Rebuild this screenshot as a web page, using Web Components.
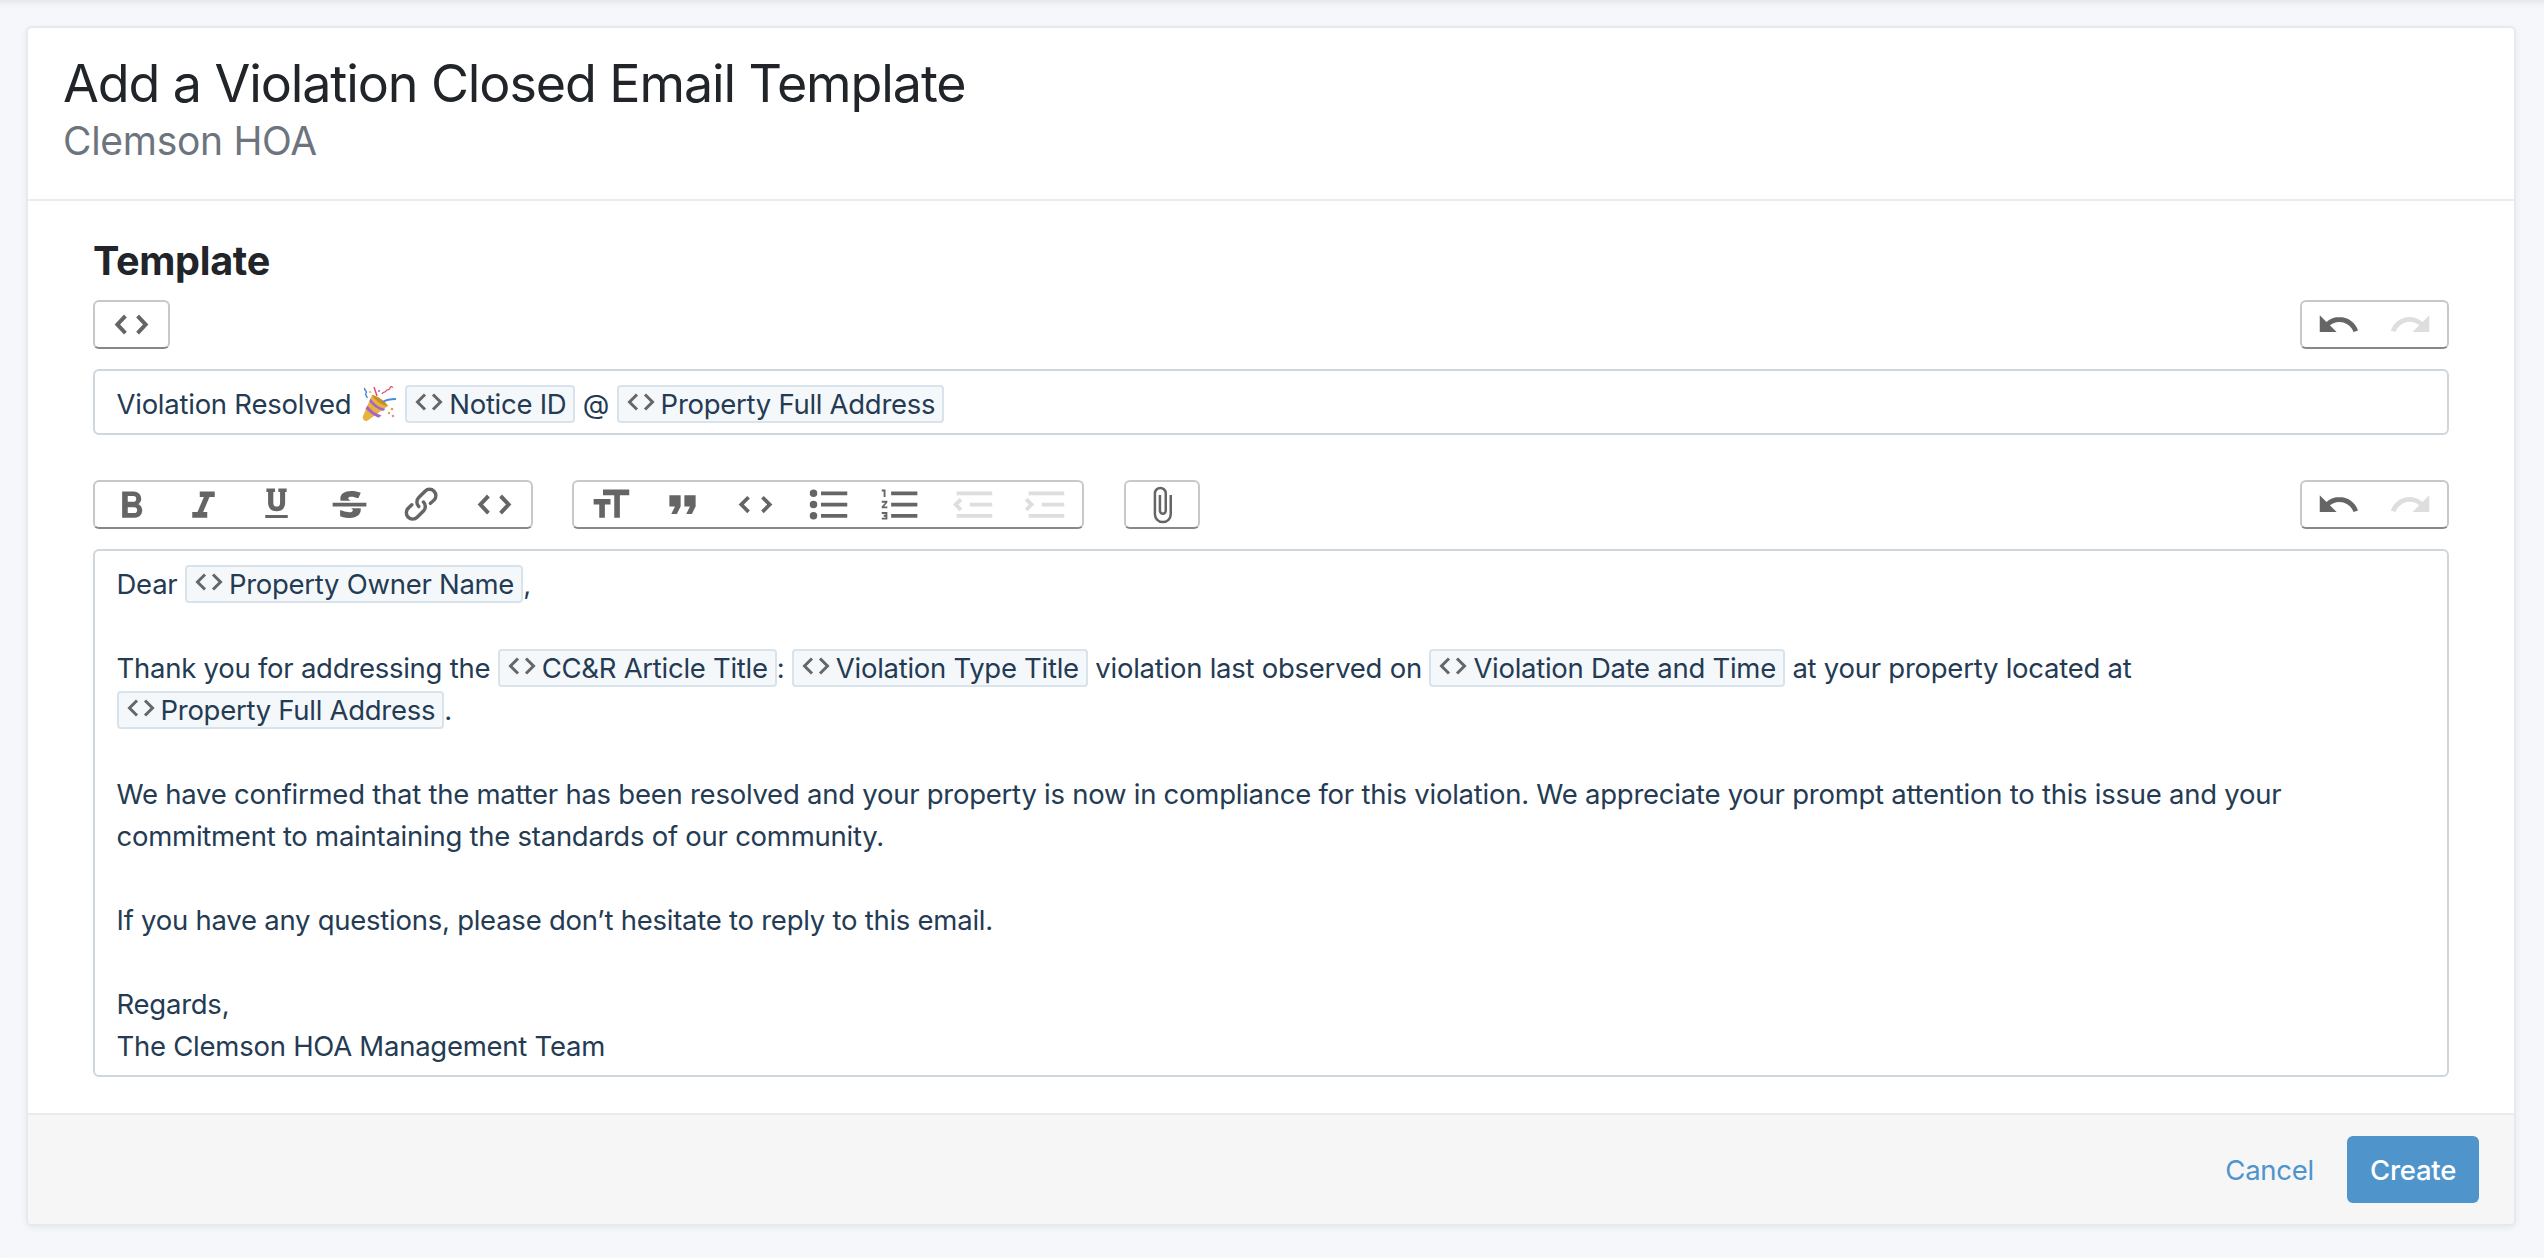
<!DOCTYPE html>
<html lang="en">
<head>
<meta charset="utf-8">
<title>Add a Violation Closed Email Template</title>
<style>
  html, body { margin: 0; height: 100%; }
  body { background: #f5f7fa; font-family: Inter, "Liberation Sans", sans-serif; overflow: hidden; }
</style>
</head>
<body>
<template-page>
  <page-card>
    <card-header slot="header" title="Add a Violation Closed Email Template" subtitle="Clemson HOA"></card-header>

    <section-title>Template</section-title>

    <tool-row class="top">
      <tool-group><tool-btn icon="codeTall"></tool-btn></tool-group>
      <tool-group slot="end"><tool-btn icon="undo"></tool-btn><tool-btn icon="redo" disabled></tool-btn></tool-group>
    </tool-row>

    <rich-box kind="subject">Violation Resolved <party-popper></party-popper> <merge-tag>Notice ID</merge-tag> @ <merge-tag>Property Full Address</merge-tag></rich-box>

    <tool-row class="main">
      <tool-group>
        <tool-btn icon="bold"></tool-btn><tool-btn icon="italic"></tool-btn><tool-btn icon="underline"></tool-btn><tool-btn icon="strike"></tool-btn><tool-btn icon="link"></tool-btn><tool-btn icon="codeTall"></tool-btn>
      </tool-group>
      <tool-group>
        <tool-btn icon="heading"></tool-btn><tool-btn icon="quote"></tool-btn><tool-btn icon="code"></tool-btn><tool-btn icon="bullets"></tool-btn><tool-btn icon="numbers"></tool-btn><tool-btn icon="outdent" disabled></tool-btn><tool-btn icon="indent" disabled></tool-btn>
      </tool-group>
      <tool-group><tool-btn icon="attach"></tool-btn></tool-group>
      <tool-group slot="end"><tool-btn icon="undo"></tool-btn><tool-btn icon="redo" disabled></tool-btn></tool-group>
    </tool-row>

    <rich-box kind="body">Dear <merge-tag>Property Owner Name</merge-tag>,<br><br>Thank you for addressing the <merge-tag>CC&amp;R Article Title</merge-tag>: <merge-tag>Violation Type Title</merge-tag> violation last observed on <merge-tag>Violation Date and Time</merge-tag> at your property located at <merge-tag>Property Full Address</merge-tag>.<br><br>We have confirmed that the matter has been resolved and your property is now in compliance for this violation. We appreciate your prompt attention to this issue and your commitment to maintaining the standards of our community.<br><br>If you have any questions, please don’t hesitate to reply to this email.<br><br>Regards,<br>The Clemson HOA Management Team</rich-box>

    <card-footer slot="footer">
      <a-link>Cancel</a-link>
      <primary-btn>Create</primary-btn>
    </card-footer>
  </page-card>
</template-page>

<script>
const ICONS = {
  bold: "M15.6 11.8c1-.7 1.6-1.8 1.6-2.8a4 4 0 0 0-4-4H7v14h7c2.1 0 3.7-1.7 3.7-3.8 0-1.5-.8-2.8-2.1-3.4zM10 7.5h3a1.5 1.5 0 1 1 0 3h-3v-3zm3.5 9H10v-3h3.5a1.5 1.5 0 1 1 0 3z",
  italic: "M10 5v3h2.2l-3.4 8H6v3h8v-3h-2.2l3.4-8H18V5h-8z",
  underline: "M6.6 3.5h4.6v1.8h-.9v5.700c0 1.400.6 2.100 1.800 2.100s1.800-.7 1.800-2.100V5.300h-.9V3.500h4.400v1.800h-.8v5.800c0 2.900-1.700 4.500-4.500 4.500s-4.600-1.600-4.600-4.500V5.300h-.9zM6 17.600h12v1.600H6z",
  strike: "M12.73 14l.28.14c.26.15.45.3.57.44.12.14.18.3.18.5 0 .3-.15.56-.44.75-.3.2-.76.3-1.39.3A13.52 13.52 0 0 1 7 14.95v3.37a10.64 10.64 0 0 0 4.84.88c1.26 0 2.35-.19 3.28-.56.93-.37 1.64-.9 2.14-1.57s.74-1.45.74-2.32c0-.26-.02-.51-.06-.75h-5.21zm-5.5-4c-.08-.34-.12-.7-.12-1.1 0-1.29.52-2.3 1.58-3.02 1.05-.72 2.5-1.08 4.34-1.08 1.62 0 3.28.34 4.97 1l-1.3 2.93c-1.47-.6-2.73-.9-3.8-.9-.55 0-.96.08-1.2.26-.26.17-.38.38-.38.64 0 .27.16.52.48.74.17.12.53.3 1.05.53H7.23zM3 13h18v-2H3v2z",
  link: "M9.88 13.7a4.3 4.3 0 0 1 0-6.07l3.37-3.37a4.26 4.26 0 0 1 6.07 0 4.3 4.3 0 0 1 0 6.06l-1.96 1.72a.91.91 0 1 1-1.3-1.3l1.97-1.71a2.46 2.46 0 0 0-3.48-3.48l-3.38 3.37a2.46 2.46 0 0 0 0 3.48.91.91 0 1 1-1.3 1.3zM4.25 19.46a4.3 4.3 0 0 1 0-6.07l1.93-1.9a.91.91 0 1 1 1.3 1.3l-1.93 1.9a2.46 2.46 0 0 0 3.48 3.48l3.37-3.38c.96-.96.96-2.52 0-3.48a.91.91 0 1 1 1.3-1.3 4.3 4.3 0 0 1 0 6.07l-3.38 3.38a4.26 4.26 0 0 1-6.07 0z",
  code: "M18.2 12L15 15.2l1.4 1.4L21 12l-4.6-4.6L15 8.8l3.2 3.2zm-12.4 0L9 8.8 7.6 7.4 3 12l4.6 4.6L9 15.2 5.8 12z",
  codeTall: "M3 12l5-5.300 1.500 1.500L5.900 12l3.600 3.800L8 17.300zM21 12l-5-5.300-1.500 1.500 3.600 3.800-3.600 3.800 1.500 1.500z",
  heading: "M12 9v3H9v7H6v-7H3V9h9zM8 4h14v3h-5v12h-3V7H8V4z",
  quote: "M6 17h3l2-4V7H5v6h3zm8 0h3l2-4V7h-6v6h3z",
  bullets: "M4 4a2 2 0 1 0 0 4 2 2 0 0 0 0-4zm0 6a2 2 0 1 0 0 4 2 2 0 0 0 0-4zm0 6a2 2 0 1 0 0 4 2 2 0 0 0 0-4zm4 3h14v-2H8v2zm0-6h14v-2H8v2zm0-8v2h14V5H8z",
  numbers: "M2 17h2v.5H3v1h1v.5H2v1h3v-4H2v1zm1-9h1V4H2v1h1v3zm-1 3h1.8L2 13.1v.9h3v-1H3.2L5 10.9V10H2v1zm5-6v2h14V5H7zm0 14h14v-2H7v2zm0-6h14v-2H7v2z",
  outdent: "M3 19h19v-2H3v2zm7-6h12v-2H10v2zm-8.3-.3l2.8 2.9L6 14.2 4 12l2-2-1.4-1.5L1 12l.7.7zM3 5v2h19V5H3z",
  indent: "M3 19h19v-2H3v2zm7-6h12v-2H10v2zm-6.9-1L1 14.2l1.4 1.4L6 12l-.7-.7-2.9-2.9L1 9.8 3.1 12zM3 5v2h19V5H3z",
  undo: "M12.5 8c-2.6 0-5 1-6.9 2.6L2 7v9h9l-3.6-3.6A8 8 0 0 1 20 16l2.4-.8a10.5 10.5 0 0 0-10-7.2z",
  redo: "M18.4 10.6a10.5 10.5 0 0 0-16.9 4.6L4 16a8 8 0 0 1 12.7-3.6L13 16h9V7l-3.6 3.6z",
  attach: "M16.5 6v11.5a4 4 0 1 1-8 0V5a2.5 2.5 0 0 1 5 0v10.5a1 1 0 0 1-2 0V6H10v9.5a2.5 2.5 0 0 0 5 0V5a4 4 0 1 0-8 0v12.5a5.5 5.5 0 0 0 11 0V6h-1.5z"
};

class TemplatePage extends HTMLElement {
  constructor() {
    super();
    this.attachShadow({mode: "open"}).innerHTML = `
      <style>
        :host { display: block; height: 1258px; box-sizing: border-box; padding: 26px 28px 0 26px;
                box-shadow: inset 0 7px 6px -5px rgba(40, 50, 70, .1); }
      </style>
      <slot></slot>`;
  }
}

class PageCard extends HTMLElement {
  constructor() {
    super();
    this.attachShadow({mode: "open"}).innerHTML = `
      <style>
        :host { display: block; background: #fff; border: 2px solid #e7e9ec; border-radius: 6px;
                box-shadow: 0 2px 6px rgba(40, 50, 70, .07); overflow: hidden; }
        .body { padding: 36px 65px 36px 65px; }
      </style>
      <slot name="header"></slot>
      <div class="body"><slot></slot></div>
      <slot name="footer"></slot>`;
  }
}

class CardHeader extends HTMLElement {
  constructor() {
    super();
    this.attachShadow({mode: "open"}).innerHTML = `
      <style>
        :host { display: block; height: 173px; box-sizing: border-box; padding: 25px 35px 0;
                border-bottom: 2px solid #e9ebee; }
        h1 { margin: 0; font: 400 52px/62px Inter, "Liberation Sans", sans-serif; color: #212529; letter-spacing: -1.1px; }
        p { margin: 0; font: 400 39px/51px Inter, "Liberation Sans", sans-serif; color: #6c757d; letter-spacing: -.3px; }
      </style>
      <h1></h1><p></p>`;
    this.shadowRoot.querySelector("h1").textContent = this.getAttribute("title");
    this.shadowRoot.querySelector("p").textContent = this.getAttribute("subtitle");
  }
}

class SectionTitle extends HTMLElement {
  constructor() {
    super();
    this.attachShadow({mode: "open"}).innerHTML = `
      <style>
        :host { display: block; font: 700 39.6px/48px Inter, "Liberation Sans", sans-serif; color: #212529;
                letter-spacing: -.3px; margin-bottom: 15px; }
      </style>
      <slot></slot>`;
  }
}

class ToolRow extends HTMLElement {
  constructor() {
    super();
    this.attachShadow({mode: "open"}).innerHTML = `
      <style>
        :host { display: flex; justify-content: space-between; align-items: flex-start; margin-bottom: 20px; }
        .left { display: flex; gap: 39.5px; }
      </style>
      <div class="left"><slot></slot></div>
      <slot name="end"></slot>`;
  }
}

class ToolGroup extends HTMLElement {
  constructor() {
    super();
    this.attachShadow({mode: "open"}).innerHTML = `
      <style>
        :host { display: flex; border: 2px solid #c8c8c8; border-bottom-color: #888; border-radius: 6px; background: #fff; }
      </style>
      <slot></slot>`;
  }
}

class ToolBtn extends HTMLElement {
  constructor() {
    super();
    const size = this.getAttribute("icon") === "attach" ? 40 : 45;
    this.attachShadow({mode: "open"}).innerHTML = `
      <style>
        :host { display: flex; align-items: center; justify-content: center; width: 72.6px; height: 45px; }
        svg { display: block; fill: #000; opacity: .6; }
        :host([disabled]) svg { opacity: .125; }
      </style>
      <svg viewBox="0 0 24 24" width="${size}" height="${size}"><path d="${ICONS[this.getAttribute("icon")]}"/></svg>`;
  }
}

class RichBox extends HTMLElement {
  constructor() {
    super();
    this.attachShadow({mode: "open"}).innerHTML = `
      <style>
        :host { display: block; box-sizing: border-box; border: 2px solid #cfd6dc; border-radius: 6px; background: #fff;
                font: 400 27.5px/42px Inter, "Liberation Sans", sans-serif; letter-spacing: -.25px; color: #243b53; padding: 12px 21.5px 8px; }
        :host([kind="subject"]) { margin-bottom: 45px; }
      </style>
      <slot></slot>`;
  }
}

class MergeTag extends HTMLElement {
  constructor() {
    super();
    this.attachShadow({mode: "open"}).innerHTML = `
      <style>
        :host { display: inline-block; box-sizing: border-box; height: 38px; line-height: 34px; padding: 0 7px 0 8px;
                background: #f5f8fb; border: 2px solid #d9e3ec; border-radius: 4px; white-space: nowrap; letter-spacing: -.28px; }
        svg { width: 28px; height: 18px; margin-right: 6px; vertical-align: 3px; fill: none; stroke: #666; stroke-width: 3; }
      </style>
      <svg viewBox="0 0 28 18"><path d="M10 1.500 2.500 9 10 16.500M18 1.500 25.500 9 18 16.500"/></svg><slot></slot>`;
  }
}

class PartyPopper extends HTMLElement {
  constructor() {
    super();
    this.attachShadow({mode: "open"}).innerHTML = `
      <style>
        :host { display: inline-block; width: 35px; height: 36px; vertical-align: -8px; margin: 0 2px; }
        svg { display: block; }
      </style>
      <svg viewBox="0 0 35 36" width="35" height="36" role="img" aria-label="party popper">
        <path d="M2 30 11 9c5 1 13 6 16 11L6 35c-3 0-5-2-4-5z" fill="#e6b33e"/>
        <path d="M6.500 19.500c4 5 8 8 14 10l-3 2.200c-5-2-8.500-5-13-9zM9.500 12.500c4 5.500 8 9 15 10.500l-2.500 2c-6-2-10-5-13.700-9.500z" fill="#a862c9"/>
        <path d="M11 9c5 1 13 6 16 11-5 0-13-5-16-11z" fill="#c98f25"/>
        <path d="M4 2c-2 2 3 3 1 5s2 3 1 5" stroke="#4a8be0" stroke-width="1.500" fill="none"/>
        <path d="M13 1l3 9" stroke="#e0525f" stroke-width="1.500"/>
        <path d="M21 8c1-3 3-1 4-3s3 0 4-3 2 0 3-1" stroke="#e0526f" stroke-width="1.300" fill="none"/>
        <path d="M22 16c4-3 8-3 13-3" stroke="#4a8be0" stroke-width="1.800" fill="none"/>
        <circle cx="31" cy="23" r="1.300" fill="#e89b3c"/><circle cx="28" cy="27" r="1.200" fill="#e0a43c"/><circle cx="32" cy="30" r="1.300" fill="#e98aa5"/>
        <circle cx="18" cy="5" r="1" fill="#a862c9"/><circle cx="9" cy="6" r="1" fill="#e8b33c"/>
      </svg>`;
  }
}

class CardFooter extends HTMLElement {
  constructor() {
    super();
    this.attachShadow({mode: "open"}).innerHTML = `
      <style>
        :host { display: flex; justify-content: flex-end; align-items: center; gap: 33px; height: 111px; box-sizing: border-box;
                background: #f6f6f6; border-top: 2px solid #e9ebee; padding: 0 35px 0 0; }
      </style>
      <slot></slot>`;
  }
}

class ALink extends HTMLElement {
  constructor() {
    super();
    this.attachShadow({mode: "open"}).innerHTML = `
      <style>
        :host { display: block; font: 400 27.5px/42px Inter, "Liberation Sans", sans-serif; letter-spacing: -.25px; color: #4f94cd; cursor: pointer; }
      </style>
      <slot></slot>`;
  }
}

class PrimaryBtn extends HTMLElement {
  constructor() {
    super();
    this.attachShadow({mode: "open"}).innerHTML = `
      <style>
        :host { display: flex; align-items: center; justify-content: center; width: 132px; height: 67px;
                background: #5094cc; color: #fff; border-radius: 6px; font: 500 27.5px/42px Inter, "Liberation Sans", sans-serif; letter-spacing: -.25px; }
      </style>
      <slot></slot>`;
  }
}

customElements.define("template-page", TemplatePage);
customElements.define("page-card", PageCard);
customElements.define("card-header", CardHeader);
customElements.define("section-title", SectionTitle);
customElements.define("tool-row", ToolRow);
customElements.define("tool-group", ToolGroup);
customElements.define("tool-btn", ToolBtn);
customElements.define("rich-box", RichBox);
customElements.define("merge-tag", MergeTag);
customElements.define("party-popper", PartyPopper);
customElements.define("card-footer", CardFooter);
customElements.define("a-link", ALink);
customElements.define("primary-btn", PrimaryBtn);
</script>
</body>
</html>
